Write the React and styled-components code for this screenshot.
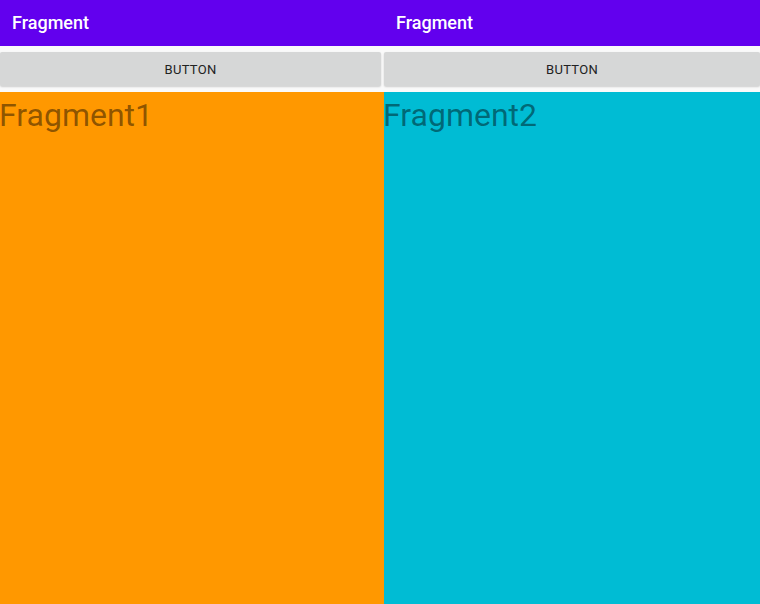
import styled, { createGlobalStyle } from "styled-components"

const GlobalStyle = createGlobalStyle`
    html, body {
        margin: 0;
        padding: 0;
        background: #ffffff;
        font-family: Roboto, "Noto Sans", sans-serif;
    }
    #root {
        height: 604px;
    }
`

function FragmentPane({ width, color, label, gap }) {
    return (
        <Pane $width={width}>
            <Toolbar>
                <Title>Fragment</Title>
            </Toolbar>
            <ButtonBar $gap={gap}>
                <ActionButton>BUTTON</ActionButton>
            </ButtonBar>
            <Content $color={color}>
                <BigLabel>{label}</BigLabel>
            </Content>
        </Pane>
    )
}

export default function App() {
    return (
        <>
            <GlobalStyle />
            <Screen>
                <FragmentPane width={384} color="#ff9800" label="Fragment1" gap={3} />
                <FragmentPane width={376} color="#00bcd4" label="Fragment2" gap={0} />
            </Screen>
        </>
    )
}

// styled components
const Screen = styled.div`
    display: flex;
    width: 760px;
    height: 604px;
    overflow: hidden;
`

const Pane = styled.div`
    display: flex;
    flex-direction: column;
    width: ${(p) => p.$width}px;
    flex-shrink: 0;
    background: #fafafa;
`

const Toolbar = styled.div`
    height: 46px;
    background: #6200ee;
    display: flex;
    align-items: center;
    padding-left: 12px;
`

const Title = styled.span`
    color: #ffffff;
    font-family: Roboto, sans-serif;
    font-size: 18px;
    font-weight: 500;
    margin-top: -2px;
`

const ButtonBar = styled.div`
    display: flex;
    padding: 6px ${(p) => p.$gap}px 6px 0;
`

const ActionButton = styled.button`
    flex: 1;
    height: 34px;
    border: none;
    border-radius: 2px;
    background: #d6d7d7;
    box-shadow: 0 1px 2px rgba(0, 0, 0, 0.18);
    color: #222222;
    font-family: Roboto, sans-serif;
    font-size: 13px;
    font-weight: 400;
    letter-spacing: 0.3px;
    padding: 0;
`

const Content = styled.div`
    flex: 1;
    background: ${(p) => p.$color};
`

const BigLabel = styled.div`
    font-family: Roboto, sans-serif;
    font-size: 32px;
    line-height: 46px;
    color: rgba(0, 0, 0, 0.45);
    margin-left: -1px;
`
